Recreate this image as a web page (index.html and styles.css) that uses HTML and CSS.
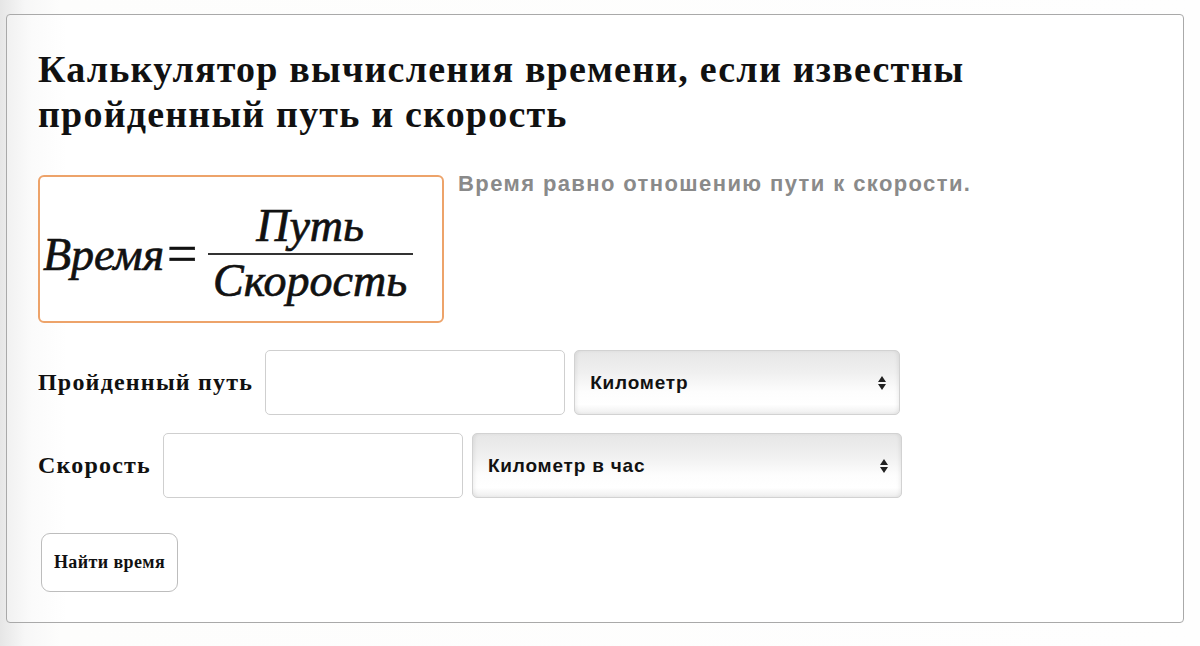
FILE: index.html
```html
<!DOCTYPE html>
<html lang="ru">
<head>
<meta charset="utf-8">
<link rel="stylesheet" href="styles.css">
</head>
<body>
<div class="page">
  <div class="card">
    <h1 class="title">Калькулятор вычисления времени, если известны пройденный путь и скорость</h1>
    <div class="intro">
      <div class="formula">
        <span class="f-left">Время</span>
        <span class="f-eq">=</span>
        <span class="frac">
          <span class="num">Путь</span>
          <span class="den">Скорость</span>
        </span>
      </div>
      <p class="desc">Время равно отношению пути к скорости.</p>
    </div>
    <div class="row">
      <label class="lbl">Пройденный путь</label>
      <input class="field" type="text">
      <select class="unit unit-1"><option>Километр</option></select>
    </div>
    <div class="row">
      <label class="lbl">Скорость</label>
      <input class="field" type="text">
      <select class="unit unit-2"><option>Километр в час</option></select>
    </div>
    <button class="btn">Найти время</button>
  </div>
</div>
</body>
</html>
```
FILE: styles.css
```css
html, body {
  margin: 0;
  padding: 0;
}
body {
  width: 1200px;
  height: 646px;
  overflow: hidden;
  background: linear-gradient(to right, #e6e6e6 0px, #f7f7f7 25px, #fdfdfc 60px, #fefefe 100%);
  font-family: "Liberation Serif", serif;
}
.page {
  padding: 14px 16px 0 6px;
}
.card {
  box-sizing: border-box;
  height: 609px;
  border: 1px solid #a9a9a9;
  border-radius: 4px;
  background: linear-gradient(to right, #f1f1f1 0px, #fbfbfb 25px, #ffffff 60px);
  padding: 32px 0 0 31px;
  display: flex;
  flex-direction: column;
  align-items: flex-start;
}
.title {
  margin: 0;
  font-size: 38px;
  line-height: 45px;
  font-weight: bold;
  letter-spacing: 1.2px;
  color: #111;
  width: 1000px;
}
.intro {
  display: flex;
  gap: 14px;
  margin-top: 38px;
}
.formula {
  box-sizing: border-box;
  width: 406px;
  height: 148px;
  border: 2px solid #eda36a;
  border-radius: 6px;
  background: #fff;
  display: flex;
  align-items: center;
  padding: 10px 0 0 3px;
  font-style: italic;
  font-size: 46px;
  color: #111;
  -webkit-text-stroke: 0.7px #111;
}
.f-eq {
  font-style: normal;
  font-size: 54px;
  line-height: 46px;
  margin: 0 10px 0 3px;
  -webkit-text-stroke: 0.4px #111;
}
.frac {
  display: flex;
  flex-direction: column;
  align-items: center;
  width: 205px;
}
.num {
  line-height: 46px;
  padding-bottom: 4px;
}
.den {
  border-top: 2px solid #333;
  width: 100%;
  text-align: center;
  line-height: 48px;
  padding-top: 2px;
}
.desc {
  margin: 0;
  font-family: "Liberation Sans", Arial, sans-serif;
  font-weight: bold;
  font-size: 22px;
  letter-spacing: 1.4px;
  color: #8a8a8a;
  line-height: 18px;
}
.row {
  display: flex;
  align-items: center;
  margin-top: 27px;
}
.row + .row {
  margin-top: 18px;
}
.lbl {
  font-weight: bold;
  font-size: 24px;
  color: #111;
  margin-right: 12px;
  letter-spacing: 1.2px;
}
.field {
  box-sizing: border-box;
  width: 300px;
  height: 65px;
  border: 1px solid #cfcfcf;
  border-radius: 5px;
  background: #fff;
  margin: 0 9px 0 0;
  padding: 0 10px;
}
.unit {
  box-sizing: border-box;
  height: 65px;
  -webkit-appearance: none;
  appearance: none;
  border: 1px solid #d2d2d2;
  border-radius: 5px;
  font-family: "Liberation Sans", Arial, sans-serif;
  font-weight: bold;
  font-size: 19px;
  letter-spacing: 0.8px;
  color: #111;
  padding: 0 30px 0 15px;
  background-color: #f3f3f3;
  background-image:
    url("data:image/svg+xml;utf8,<svg xmlns='http://www.w3.org/2000/svg' width='10' height='16' viewBox='0 0 10 16'><path d='M5 1 L9 7 H1 Z M5 15 L9 9 H1 Z' fill='%23222'/></svg>"),
    linear-gradient(to bottom, #e6e6e6 0%, #f0f0f0 35%, #fdfdfd 65%, #ffffff 85%, #eeeeee 100%);
  background-repeat: no-repeat, no-repeat;
  background-position: right 12px center, 0 0;
  background-size: 10px 16px, 100% 100%;
  box-shadow: inset 3px 0 4px -2px rgba(0,0,0,0.08), inset -3px 0 4px -2px rgba(0,0,0,0.08);
}
.unit-1 {
  width: 326px;
}
.unit-2 {
  width: 430px;
}
.btn {
  margin-top: 35px;
  margin-left: 3px;
  box-sizing: border-box;
  width: 137px;
  height: 59px;
  border: 1px solid #bdbdbd;
  border-radius: 9px;
  background: #fff;
  font-family: "Liberation Serif", serif;
  font-weight: bold;
  font-size: 18px;
  letter-spacing: 0.4px;
  color: #111;
  padding: 0;
}
```
